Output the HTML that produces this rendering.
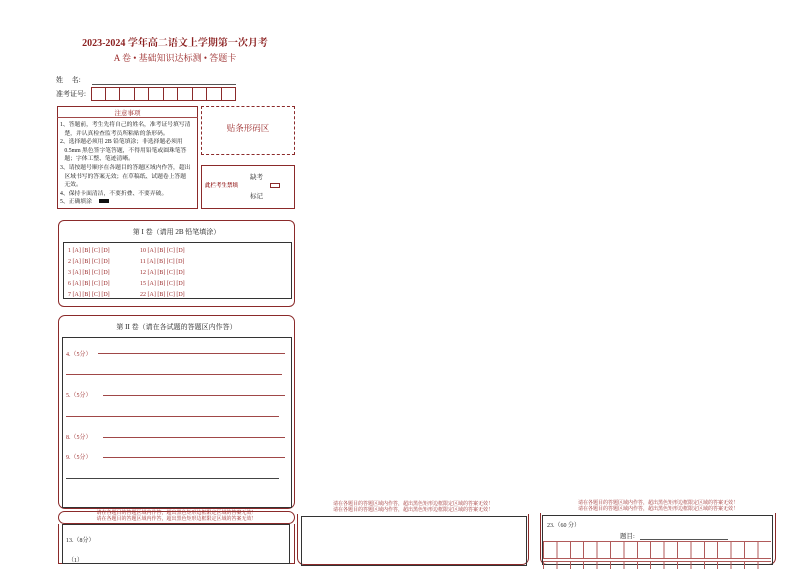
<!DOCTYPE html>
<html><head><meta charset="utf-8"><style>
body{margin:0;width:794px;height:562px;background:#fff;position:relative;overflow:hidden;font-family:"Liberation Serif","Noto Serif CJK SC",serif;color:#222}
.a{position:absolute;white-space:nowrap}
.r{color:#9b2a2a}
.bx{position:absolute;border:1px solid #8b2a2a;box-sizing:border-box}
.k{position:absolute;border:1px solid #333;box-sizing:border-box}
.ln{position:absolute;height:0;border-top:1px solid #a04848}
.s{font-size:6px}
</style></head><body>
<div class="a r" style="left:0;width:350px;text-align:center;top:34px;font-size:10px;font-weight:bold;color:#8b1f1f">2023-2024 学年高二语文上学期第一次月考</div>
<div class="a r" style="left:0;width:350px;text-align:center;top:51px;font-size:9px">A 卷 • 基础知识达标测 • 答题卡</div>
<div class="a" style="left:56px;top:75px;font-size:7px">姓&nbsp;&nbsp;&nbsp;&nbsp;&nbsp;名:</div>
<div class="ln" style="left:92px;top:84px;width:144px;border-color:#555"></div>
<div class="a" style="left:56px;top:89px;font-size:7px">准考证号:</div>
<div style="position:absolute;left:91px;top:87px;display:flex">
<div style="width:14.5px;height:14px;border:1px solid #8b2a2a;box-sizing:border-box"></div><div style="width:14.5px;height:14px;border:1px solid #8b2a2a;border-left:0;box-sizing:border-box"></div><div style="width:14.5px;height:14px;border:1px solid #8b2a2a;border-left:0;box-sizing:border-box"></div><div style="width:14.5px;height:14px;border:1px solid #8b2a2a;border-left:0;box-sizing:border-box"></div><div style="width:14.5px;height:14px;border:1px solid #8b2a2a;border-left:0;box-sizing:border-box"></div><div style="width:14.5px;height:14px;border:1px solid #8b2a2a;border-left:0;box-sizing:border-box"></div><div style="width:14.5px;height:14px;border:1px solid #8b2a2a;border-left:0;box-sizing:border-box"></div><div style="width:14.5px;height:14px;border:1px solid #8b2a2a;border-left:0;box-sizing:border-box"></div><div style="width:14.5px;height:14px;border:1px solid #8b2a2a;border-left:0;box-sizing:border-box"></div><div style="width:14.5px;height:14px;border:1px solid #8b2a2a;border-left:0;box-sizing:border-box"></div></div>
<div class="bx" style="left:57px;top:106px;width:141px;height:103px"></div>
<div class="ln" style="left:57px;top:117px;width:141px"></div>
<div class="a r" style="left:57px;width:141px;text-align:center;top:108px;font-size:6.5px">注意事项</div>
<div class="a" style="left:60px;top:121px;font-size:5.8px;line-height:8.6px;white-space:normal;width:136px;color:#111">1、答题前，考生先将自己的姓名，准考证号填写清<br>&nbsp;&nbsp;&nbsp;楚，并认真检查监考员所粘贴的条形码。<br>2、选择题必须用 2B 铅笔填涂；非选择题必须用<br>&nbsp;&nbsp;&nbsp;0.5mm 黑色签字笔答题，不得用铅笔或圆珠笔答<br>&nbsp;&nbsp;&nbsp;题；字体工整、笔迹清晰。<br>3、请按题号顺序在各题目的答题区域内作答，超出<br>&nbsp;&nbsp;&nbsp;区域书写的答案无效；在草稿纸、试题卷上答题<br>&nbsp;&nbsp;&nbsp;无效。<br>4、保持卡面清洁，不要折叠、不要弄破。<br>5、正确填涂 <span style="display:inline-block;width:10px;height:4px;background:#111;margin-left:6px"></span></div>
<div class="bx" style="left:201px;top:106px;width:94px;height:49px;border-style:dashed"></div>
<div class="a r" style="left:201px;width:94px;text-align:center;top:122px;font-size:8.5px">贴条形码区</div>
<div class="bx" style="left:201px;top:165px;width:94px;height:44px"></div>
<div class="a" style="left:250px;top:172px;font-size:6.5px">缺考</div>
<div class="a" style="left:250px;top:191px;font-size:6.5px">标记</div>
<div class="a r" style="left:205px;top:181px;font-size:5.5px;font-weight:bold">此栏考生禁填</div>
<div class="bx" style="left:270px;top:183px;width:10px;height:5px"></div>

<div class="bx" style="left:58px;top:220px;width:237px;height:87px;border-radius:6px"></div>
<div class="a" style="left:58px;width:237px;text-align:center;top:227px;font-size:7px">第 I 卷（请用 2B 铅笔填涂）</div>
<div class="k" style="left:63px;top:242px;width:229px;height:57px"></div>
<div class="a r s" style="left:68px;top:246px;line-height:10.9px">1 [A] [B] [C] [D]<br>2 [A] [B] [C] [D]<br>3 [A] [B] [C] [D]<br>6 [A] [B] [C] [D]<br>7 [A] [B] [C] [D]</div>
<div class="a r s" style="left:140px;top:246px;line-height:10.9px">10 [A] [B] [C] [D]<br>11 [A] [B] [C] [D]<br>12 [A] [B] [C] [D]<br>15 [A] [B] [C] [D]<br>22 [A] [B] [C] [D]</div>

<div class="bx" style="left:58px;top:315px;width:237px;height:194px;border-radius:7px"></div>
<div class="a" style="left:58px;width:237px;text-align:center;top:322px;font-size:7px">第 II 卷（请在各试题的答题区内作答）</div>
<div class="k" style="left:62px;top:337px;width:230px;height:171px"></div>
<div class="a r s" style="left:66px;top:349px">4.（5分）</div><div class="ln" style="left:98px;top:353px;width:187px"></div>
<div class="ln" style="left:66px;top:374px;width:216px"></div>
<div class="a r s" style="left:66px;top:390px">5.（5分）</div><div class="ln" style="left:103px;top:395px;width:182px"></div>
<div class="ln" style="left:66px;top:416px;width:213px"></div>
<div class="a r s" style="left:66px;top:432px">8.（5分）</div><div class="ln" style="left:103px;top:437px;width:182px"></div>
<div class="a r s" style="left:66px;top:452px">9.（5分）</div><div class="ln" style="left:103px;top:457px;width:182px"></div>
<div class="ln" style="left:66px;top:478px;width:213px;border-color:#444"></div>
<div class="bx" style="left:58px;top:511px;width:237px;height:13px;border-radius:7px"></div>
<div class="a r" style="left:58px;width:237px;text-align:center;top:511px;font-size:5px;line-height:5.5px">请在各题目的答题区域内作答，超出黑色矩形边框限定区域的答案无效！<br>请在各题目的答题区域内作答，超出黑色矩形边框限定区域的答案无效！</div>
<div class="bx" style="left:58px;top:524px;width:237px;height:40px;border-top:0"></div>
<div class="k" style="left:62px;top:524px;width:228px;height:40px"></div>
<div class="a s" style="left:66px;top:535px">13.（8分）</div>
<div class="a s" style="left:68px;top:555px">（1）</div>

<div class="bx" style="left:297px;top:503px;width:232px;height:62px;border-radius:7px"></div>
<div class="a r" style="left:297px;width:232px;text-align:center;top:502px;font-size:5px;line-height:6px;background:#fff">请在各题目的答题区域内作答，超出黑色矩形边框限定区域的答案无效！<br>请在各题目的答题区域内作答，超出黑色矩形边框限定区域的答案无效！</div>
<div class="k" style="left:301px;top:516px;width:226px;height:50px"></div>

<div class="bx" style="left:540px;top:502px;width:236px;height:63px;border-radius:7px"></div>
<div class="a r" style="left:540px;width:236px;text-align:center;top:501px;font-size:5px;line-height:6px;background:#fff">请在各题目的答题区域内作答，超出黑色矩形边框限定区域的答案无效！<br>请在各题目的答题区域内作答，超出黑色矩形边框限定区域的答案无效！</div>
<div class="k" style="left:542px;top:515px;width:231px;height:50px"></div>
<div class="a s" style="left:547px;top:520px">23.（60 分）</div>
<div class="a" style="left:620px;top:531px;font-size:6.5px">题目:</div>
<div class="ln" style="left:640px;top:539px;width:88px;border-color:#555"></div>
<div style="position:absolute;left:543px;top:541px;width:228px;height:18px;background:repeating-linear-gradient(90deg,#b05a5a 0 1px,transparent 1px 13.4px);border-top:1px solid #b05a5a;border-bottom:1px solid #b05a5a;box-sizing:border-box"></div>
<div style="position:absolute;left:543px;top:561px;width:228px;height:8px;background:repeating-linear-gradient(90deg,#b05a5a 0 1px,transparent 1px 13.4px);border-top:1px solid #b05a5a;box-sizing:border-box"></div>
</body></html>
